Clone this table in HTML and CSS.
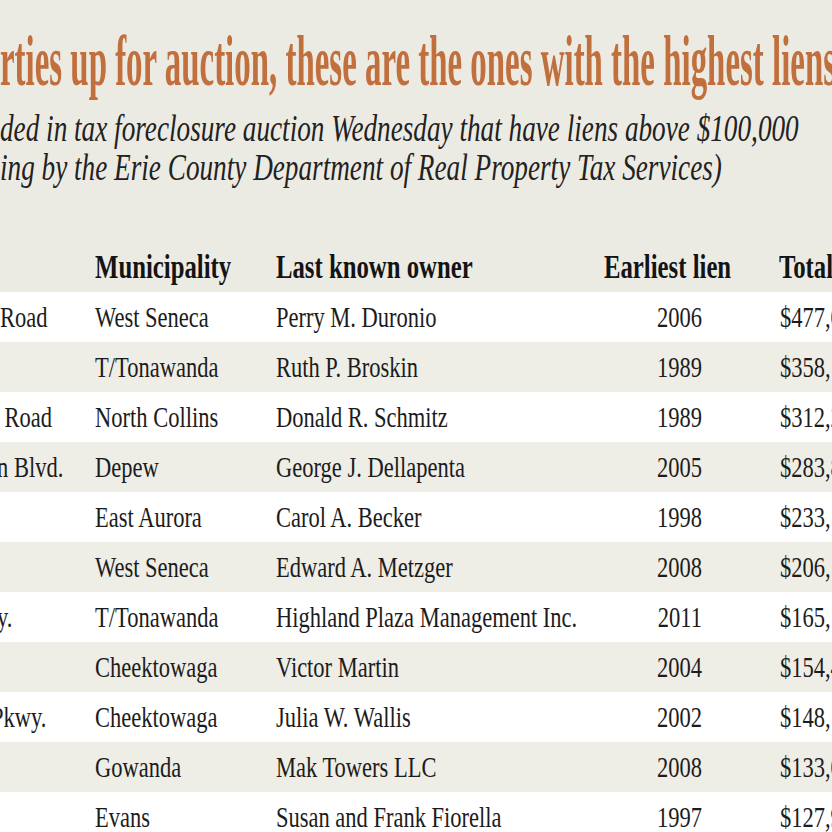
FILE: index.html
```html
<!DOCTYPE html>
<html lang="en">
<head>
<meta charset="utf-8">
<title>Properties up for auction with the highest liens</title>
<link rel="stylesheet" href="styles.css">
</head>
<body>
<header class="head">
  <h1 class="title">rties up for auction, these are the ones with the highest liens</h1>
  <p class="dek"><span class="dek-line">ded in tax foreclosure auction Wednesday that have liens above $100,000</span><span class="dek-line">ing by the Erie County Department of Real Property Tax Services)</span></p>
</header>
<div class="table">
  <div class="row thead">
    <div class="c addr"></div>
    <div class="c muni">Municipality</div>
    <div class="c owner">Last known owner</div>
    <div class="c year">Earliest lien</div>
    <div class="c total">Total</div>
  </div>
  <div class="row">
    <div class="c addr">Road</div>
    <div class="c muni">West Seneca</div>
    <div class="c owner">Perry M. Duronio</div>
    <div class="c year">2006</div>
    <div class="c total">$477,0</div>
  </div>
  <div class="row">
    <div class="c addr"></div>
    <div class="c muni">T/Tonawanda</div>
    <div class="c owner">Ruth P. Broskin</div>
    <div class="c year">1989</div>
    <div class="c total">$358,</div>
  </div>
  <div class="row">
    <div class="c addr pad">Road</div>
    <div class="c muni">North Collins</div>
    <div class="c owner">Donald R. Schmitz</div>
    <div class="c year">1989</div>
    <div class="c total">$312,2</div>
  </div>
  <div class="row">
    <div class="c addr cut">n Blvd.</div>
    <div class="c muni">Depew</div>
    <div class="c owner">George J. Dellapenta</div>
    <div class="c year">2005</div>
    <div class="c total">$283,8</div>
  </div>
  <div class="row">
    <div class="c addr"></div>
    <div class="c muni">East Aurora</div>
    <div class="c owner">Carol A. Becker</div>
    <div class="c year">1998</div>
    <div class="c total">$233,</div>
  </div>
  <div class="row">
    <div class="c addr"></div>
    <div class="c muni">West Seneca</div>
    <div class="c owner">Edward A. Metzger</div>
    <div class="c year">2008</div>
    <div class="c total">$206,</div>
  </div>
  <div class="row">
    <div class="c addr cut">y.</div>
    <div class="c muni">T/Tonawanda</div>
    <div class="c owner">Highland Plaza Management Inc.</div>
    <div class="c year">2011</div>
    <div class="c total">$165,</div>
  </div>
  <div class="row">
    <div class="c addr"></div>
    <div class="c muni">Cheektowaga</div>
    <div class="c owner">Victor Martin</div>
    <div class="c year">2004</div>
    <div class="c total">$154,4</div>
  </div>
  <div class="row">
    <div class="c addr cut-more">Pkwy.</div>
    <div class="c muni">Cheektowaga</div>
    <div class="c owner">Julia W. Wallis</div>
    <div class="c year">2002</div>
    <div class="c total">$148,</div>
  </div>
  <div class="row">
    <div class="c addr"></div>
    <div class="c muni">Gowanda</div>
    <div class="c owner">Mak Towers LLC</div>
    <div class="c year">2008</div>
    <div class="c total">$133,0</div>
  </div>
  <div class="row">
    <div class="c addr"></div>
    <div class="c muni">Evans</div>
    <div class="c owner">Susan and Frank Fiorella</div>
    <div class="c year">1997</div>
    <div class="c total">$127,9</div>
  </div>
</div>
</body>
</html>
```
FILE: styles.css
```css
html, body {
  margin: 0;
  padding: 0;
  width: 832px;
  height: 832px;
  overflow: hidden;
  background: #ecebe3;
}

body {
  font-family: "Liberation Serif", "Times New Roman", serif;
  color: #1c1c1c;
}

.head {
  padding-top: 25px;
}

.title {
  margin: 0;
  font-size: 72px;
  line-height: 72px;
  font-weight: bold;
  color: #c06f3d;
  white-space: nowrap;
  transform: scaleX(0.457);
  transform-origin: 0 0;
}

.dek {
  margin: 12px 0 0;
  font-size: 38px;
  line-height: 39px;
  font-style: italic;
  color: #222;
  white-space: nowrap;
  transform: scaleX(0.716);
  transform-origin: 0 0;
}

.dek-line {
  display: block;
}

.table {
  margin-top: 59px;
  width: 1110px;
  transform: scaleX(0.75);
  transform-origin: 0 0;
}

.row {
  display: grid;
  grid-template-columns: 126.7px 241.3px 437.3px 130.7px 1fr;
  height: 50px;
  font-size: 30px;
  line-height: 50px;
  white-space: nowrap;
}

.row:nth-child(even) {
  background: #ffffff;
}

.row:nth-child(odd) {
  background: #eeede6;
}

.row.thead {
  background: transparent;
  height: 46px;
  font-size: 33px;
  line-height: 42px;
  font-weight: bold;
  color: #141414;
}

.c {
  min-width: 0;
}

.year {
  text-align: right;
}

.thead .year {
  margin-right: -34.7px;
}

.total {
  padding-left: 104px;
}

.thead .total {
  padding-left: 102.7px;
}

.addr.pad {
  padding-left: 6px;
}

.addr.cut {
  text-indent: -4px;
}

.addr.cut-more {
  text-indent: -12px;
}
```
